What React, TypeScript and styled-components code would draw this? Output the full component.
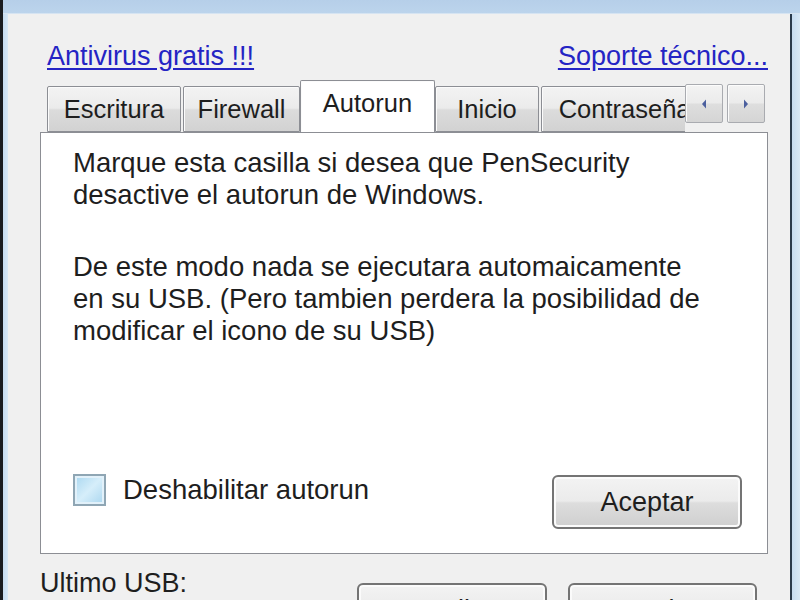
import * as React from "react"
import styled, {createGlobalStyle} from "styled-components";

const FONT = `"Liberation Sans", Arial, sans-serif`;

const GlobalStyle = createGlobalStyle`
  html, body {
    margin: 0;
    padding: 0;
    background: #f0f0f0;
    overflow: hidden;
  }
`

const tabs = [
    {label: 'Escritura', width: 134},
    {label: 'Firewall', width: 117},
    {label: 'Autorun', width: 135, active: true},
    {label: 'Inicio', width: 104},
    {label: 'Contraseñas', width: 180},
]

const App = () => {
    return (
        <>
            <GlobalStyle/>
            <Screen>
                <OuterEdge/>
                <FrameColumn>
                    <TitleStrip/>
                    <FrameRow>
                        <SideBorder $width={5}/>
                        <Dialog>
                            <LinksRow>
                                <DialogLink href="#">Antivirus gratis !!!</DialogLink>
                                <DialogLink href="#">Soporte técnico...</DialogLink>
                            </LinksRow>

                            <TabStrip>
                                <TabList>
                                    {tabs.map(tab => (
                                        <Tab key={tab.label} $width={tab.width} $active={!!tab.active}>
                                            {tab.label}
                                        </Tab>
                                    ))}
                                </TabList>
                                <SpinGroup>
                                    <SpinButton>
                                        <svg width="8" height="12" viewBox="0 0 8 12">
                                            <path d="M6 1.5 L2 6 L6 10.5 Z" fill="#4b5f9e"/>
                                        </svg>
                                    </SpinButton>
                                    <SpinButton>
                                        <svg width="8" height="12" viewBox="0 0 8 12">
                                            <path d="M2 1.5 L6 6 L2 10.5 Z" fill="#4b5f9e"/>
                                        </svg>
                                    </SpinButton>
                                </SpinGroup>
                            </TabStrip>

                            <Panel>
                                <Paragraph>
                                    Marque esta casilla si desea que PenSecurity<br/>
                                    desactive el autorun de Windows.
                                </Paragraph>
                                <Paragraph $gap>
                                    De este modo nada se ejecutara automaicamente<br/>
                                    en su USB. (Pero tambien perdera la posibilidad de<br/>
                                    modificar el icono de su USB)
                                </Paragraph>

                                <PanelFooter>
                                    <CheckRow>
                                        <CheckBox/>
                                        <CheckLabel>Deshabilitar autorun</CheckLabel>
                                    </CheckRow>
                                    <PushButton $width={190}>Aceptar</PushButton>
                                </PanelFooter>
                            </Panel>

                            <BottomRow>
                                <StatusLabel>Ultimo USB:</StatusLabel>
                                <BottomButtons>
                                    <PushButton $width={190}>Salir</PushButton>
                                    <PushButton $width={189}>Ocultar</PushButton>
                                </BottomButtons>
                            </BottomRow>
                        </Dialog>
                        <SideBorder $width={8}/>
                    </FrameRow>
                </FrameColumn>
            </Screen>
        </>
    )
}

const Screen = styled.div`
  display: flex;
  width: 800px;
  height: 600px;
  overflow: hidden;
  font-family: ${FONT};
  color: #1e1e1e;
`
const OuterEdge = styled.div`
  flex: 0 0 3px;
  background: #1a1c20;
`
const FrameColumn = styled.div`
  flex: 1;
  min-width: 0;
  display: flex;
  flex-direction: column;
`
const TitleStrip = styled.div`
  flex: 0 0 13px;
  background: linear-gradient(#b6cfe9, #bcd4ec);
  border-bottom: 1px solid #d6e4f2;
`
const FrameRow = styled.div`
  flex: 1;
  min-height: 0;
  display: flex;
  background: #cfe2f4;
  overflow: hidden;
`
const SideBorder = styled.div<{ $width: number }>`
  flex: 0 0 ${p => p.$width}px;
  background: linear-gradient(90deg, #c6dcf1, #d8e8f6);
`
const Dialog = styled.div`
  flex: 1;
  min-width: 0;
  display: flex;
  flex-direction: column;
  background: #f0f0f0;
  border-right: 2px solid #2a3a4c;
  padding: 0 22px 0 32px;
`
const LinksRow = styled.div`
  flex: 0 0 40px;
  display: flex;
  justify-content: space-between;
  margin-top: 26px;
  padding: 0 0 0 7px;
`
const DialogLink = styled.a`
  font-size: 27px;
  line-height: 32px;
  color: #2424c4;
  text-decoration: underline;
  text-underline-offset: 3px;
`
const TabStrip = styled.div`
  flex: 0 0 52px;
  display: flex;
  align-items: flex-end;
  padding-left: 7px;
`
const TabList = styled.div`
  flex: 1;
  display: flex;
  align-items: flex-end;
  gap: 2px;
  height: 100%;
  overflow: hidden;
  min-width: 0;
`
const Tab = styled.div<{ $width: number, $active: boolean }>`
  flex: 0 0 ${p => p.$width}px;
  display: flex;
  align-items: center;
  justify-content: center;
  box-sizing: border-box;
  height: ${p => p.$active ? 53 : 46}px;
  margin: ${p => p.$active ? '0 -2px -1px -2px' : '0'};
  padding-bottom: ${p => p.$active ? 8 : 0}px;
  font-size: 25.5px;
  white-space: nowrap;
  border: 1px solid #8c8e94;
  border-bottom: ${p => p.$active ? 'none' : '1px solid #8c8e94'};
  border-radius: 2px 2px 0 0;
  background: ${p => p.$active
    ? '#ffffff'
    : 'linear-gradient(#f3f3f3 0%, #ebebeb 48%, #dcdcdc 52%, #d2d2d2 100%)'};
  box-shadow: inset 1px 1px 0 #fbfbfb;
  position: relative;
  z-index: ${p => p.$active ? 2 : 1};
`
const SpinGroup = styled.div`
  display: flex;
  gap: 4px;
  align-self: flex-start;
  margin-top: 4px;
  margin-right: 3px;
`
const SpinButton = styled.div`
  width: 38px;
  height: 39px;
  box-sizing: border-box;
  display: flex;
  align-items: center;
  justify-content: center;
  border: 1px solid #a9abb0;
  border-radius: 2px;
  background: linear-gradient(#f3f3f3 0%, #ebebeb 48%, #dedede 52%, #d5d5d5 100%);
  box-shadow: inset 1px 1px 0 #fcfcfc;
`
const Panel = styled.div`
  flex: 0 0 422px;
  display: flex;
  flex-direction: column;
  box-sizing: border-box;
  background: #ffffff;
  border: 1px solid #8c8e94;
  padding: 14px 25px 24px 32px;
  font-size: 27.5px;
  line-height: 32px;
`
const Paragraph = styled.p<{ $gap?: boolean }>`
  margin: ${p => p.$gap ? 40 : 0}px 0 0 0;
  white-space: nowrap;
`
const PanelFooter = styled.div`
  margin-top: auto;
  display: flex;
  justify-content: space-between;
  align-items: flex-start;
`
const CheckRow = styled.div`
  display: flex;
  align-items: center;
  gap: 17px;
  margin-top: -1px;
`
const CheckBox = styled.div`
  width: 33px;
  height: 32px;
  box-sizing: border-box;
  border: 2px solid #8fa6b4;
  background: linear-gradient(135deg, #a9d7f0, #d6eefa 50%, #a9d6ef);
  box-shadow: inset 0 0 0 2px #e2f1fa;
`
const CheckLabel = styled.span`
  font-size: 27.5px;
  line-height: 32px;
`
const PushButton = styled.div<{ $width: number }>`
  width: ${p => p.$width}px;
  height: 54px;
  box-sizing: border-box;
  display: flex;
  align-items: center;
  justify-content: center;
  font-size: 27px;
  border: 2px solid #747474;
  border-radius: 6px;
  background: linear-gradient(#f3f3f3 0%, #ebebeb 48%, #dddddd 52%, #cfcfcf 100%);
  box-shadow: inset 0 0 0 2px #fbfbfb;
`
const BottomRow = styled.div`
  flex-shrink: 0;
  display: flex;
  justify-content: space-between;
  align-items: flex-start;
  padding: 13px 11px 0 0;
`
const StatusLabel = styled.div`
  font-size: 27px;
  line-height: 32px;
`
const BottomButtons = styled.div`
  display: flex;
  gap: 21px;
  margin-top: 16px;
`

export default App;
